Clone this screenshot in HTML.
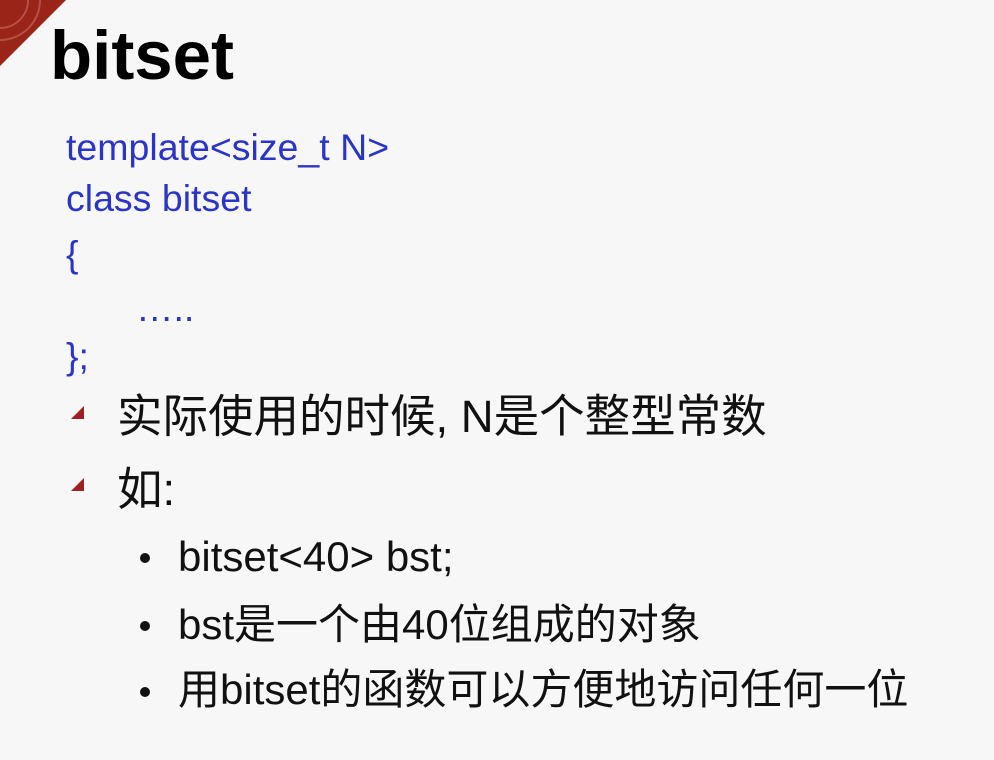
<!DOCTYPE html>
<html><head><meta charset="utf-8"><style>
body{margin:0;width:994px;height:760px;background:#f7f7f7;position:relative;overflow:hidden;font-family:"Liberation Sans","Noto Sans CJK SC",sans-serif}
.a{position:absolute;white-space:nowrap;line-height:1}
.c{color:#2a35c8;font-size:37.5px}
.t{font-size:45.5px;color:#111}
.s{font-size:42px;color:#111}
.tri{position:absolute;width:0;height:0;border-left:13px solid transparent;border-bottom:13px solid #a02020}
.dot{position:absolute;width:10px;height:10px;border-radius:50%;background:#111}
</style></head><body>
<svg class="a" style="left:0;top:0" width="70" height="70"><polygon points="0,0 66,0 0,66" fill="#9a2418"/><circle cx="0" cy="0" r="40" fill="none" stroke="#b45048" stroke-width="2"/><circle cx="0" cy="0" r="28" fill="none" stroke="#b45048" stroke-width="2"/></svg>
<div class="a" style="left:50px;top:21px;font-size:69px;font-weight:bold;color:#000">bitset</div>
<div class="a c" style="left:66px;top:129px">template&lt;size_t N&gt;</div>
<div class="a c" style="left:66px;top:180px">class bitset</div>
<div class="a c" style="left:66px;top:236px">{</div>
<div class="a c" style="left:136px;top:290px">…..</div>
<div class="a c" style="left:66px;top:338px">};</div>
<div class="tri" style="left:71px;top:406px"></div>
<div class="a t" style="left:117px;top:394px">实际使用的时候, N是个整型常数</div>
<div class="tri" style="left:71px;top:478px"></div>
<div class="a t" style="left:117px;top:467px">如:</div>
<div class="dot" style="left:140px;top:553px"></div>
<div class="a s" style="left:178px;top:536px">bitset&lt;40&gt; bst;</div>
<div class="dot" style="left:140px;top:621px"></div>
<div class="a s" style="left:178px;top:604px">bst是一个由40位组成的对象</div>
<div class="dot" style="left:140px;top:687px"></div>
<div class="a s" style="left:178px;top:669px">用bitset的函数可以方便地访问任何一位</div>
</body></html>
